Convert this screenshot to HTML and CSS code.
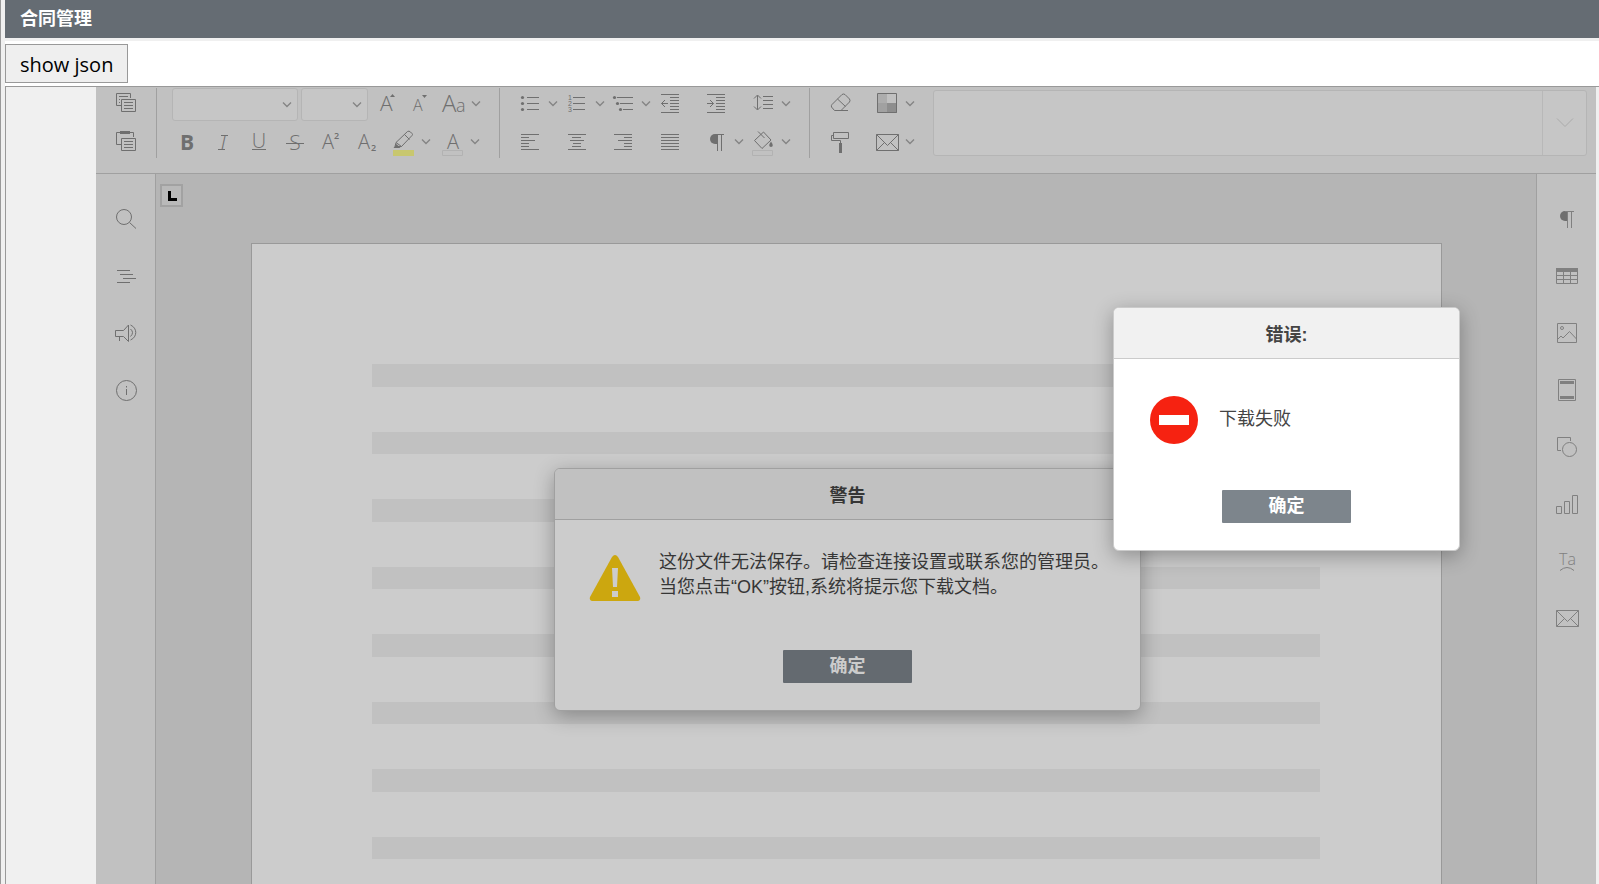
FILE: index.html
```
<!DOCTYPE html>
<html lang="zh">
  <head>
    <meta charset="utf-8" />
    <title>合同管理</title>

    <link rel="stylesheet" href="styles.css">
  </head>

  <body>
    <svg class="symbols" aria-hidden="true">
      <symbol id="caret" viewBox="0 0 10 6"><path d="M1 .5l4 4 4-4" /></symbol>
      <symbol id="pilcrow" viewBox="0 0 14 17">
        <path class="solid" d="M7 0H5a5 5 0 0 0 0 10h2z" />
        <path d="M5 .5h9M7.500 0v17M11.500 0v17" />
      </symbol>
      <symbol id="mail" viewBox="0 0 23 17">
        <path d="M.5 .5h22v16H.5zM.5 .5l11 11 11-11M.5 16.500l8-8M22.500 16.500l-8-8" />
      </symbol>
    </svg>

    <header class="title-bar"><h1>合同管理</h1></header>
    <div class="action-bar">
      <button type="button" class="json-btn">show json</button>
    </div>

    <div class="frame">
      <div class="editor">
        <!-- 工具栏 -->
        <div class="toolbar">
          <div class="group clipboard">
            <div class="row">
              <button type="button" class="tool" aria-label="复制"><svg class="icon" viewBox="0 0 24 28"><path d="M7 15.500H2.500v-12h14V8M5 6.500h9M5 9.500h1M5 12.500h1M7.500 9.500h14v12h-14zM10 12.500h9M10 15.500h9M10 18.500h9" /></svg></button>
            </div>
            <div class="row">
              <button type="button" class="tool" aria-label="粘贴"><svg class="icon" viewBox="0 0 24 28"><path d="M7 16.500H2.500v-12h17V9M7.500 10.500h14v12h-14zM10 13.500h9M10 16.500h9M10 19.500h9" /><path class="solid" d="M6 3h10v3H6z" /></svg></button>
            </div>
          </div>

          <div class="group font">
            <div class="row font-row">
              <div class="combo combo-name">
                <select aria-label="字体"></select>
                <svg class="caret"><use href="#caret" /></svg>
              </div>
              <div class="combo combo-size">
                <select aria-label="字号"></select>
                <svg class="caret"><use href="#caret" /></svg>
              </div>
              <div class="size-tools">
                <button type="button" class="tool narrow" aria-label="增大字号"><svg class="icon" viewBox="0 0 24 28"><text x="5" y="21" class="t21">A</text><path class="solid" d="M15 7l2.500-3L20 7z" /></svg></button>
                <button type="button" class="tool narrow" aria-label="减小字号"><svg class="icon" viewBox="0 0 24 28"><text x="6" y="21" class="t16">A</text><path class="solid" d="M15 5l2.500 3L20 5z" /></svg></button>
                <button type="button" class="tool" aria-label="更改大小写"><svg class="icon" viewBox="0 0 24 28"><text x="1" y="22" class="t24">A</text><text x="15" y="22" class="t18">a</text></svg><svg class="caret"><use href="#caret" /></svg></button>
              </div>
            </div>
            <div class="row">
              <button type="button" class="tool" aria-label="粗体"><svg class="icon" viewBox="0 0 24 28"><text x="5" y="22" class="t21 bold">B</text></svg></button>
              <button type="button" class="tool" aria-label="斜体"><svg class="icon" viewBox="0 0 24 28"><text x="12" y="22" class="t21 mid italic">I</text><path d="M10 7.500h7M7 21.500h7" /></svg></button>
              <button type="button" class="tool" aria-label="下划线"><svg class="icon" viewBox="0 0 24 28"><text x="12" y="20" class="t20 mid">U</text><path d="M5 21.500h14" /></svg></button>
              <button type="button" class="tool" aria-label="删除线"><svg class="icon" viewBox="0 0 24 28"><text x="12" y="22" class="t21 mid">S</text><path d="M3 15.500h18" /></svg></button>
              <button type="button" class="tool" aria-label="上标"><svg class="icon" viewBox="0 0 24 28"><text x="3" y="21" class="t20">A</text><text x="15" y="11" class="t9">2</text></svg></button>
              <button type="button" class="tool" aria-label="下标"><svg class="icon" viewBox="0 0 24 28"><text x="3" y="21" class="t20">A</text><text x="16" y="23" class="t9">2</text></svg></button>
              <button type="button" class="tool" aria-label="突出显示"><svg class="icon" viewBox="0 0 24 28"><path class="marker" d="M2 22h21v6H2z" /><path d="M5 14.500L16.500 3.500q1.500-1 3 .500l1.500 1.500q1 1 0 2L10.500 18.500zM13.500 6.500l5 5M5 14.500l-1 4 6.500 0" /><path class="solid" d="M2.500 20l3-4 4 4z" /></svg><svg class="caret"><use href="#caret" /></svg></button>
              <button type="button" class="tool" aria-label="字体颜色"><svg class="icon" viewBox="0 0 24 28"><text x="13" y="21" class="t20 mid">A</text><path class="swatch" d="M2.500 22.500h20v5h-20z" /></svg><svg class="caret"><use href="#caret" /></svg></button>
            </div>
          </div>

          <div class="group paragraph">
            <div class="row">
              <button type="button" class="tool" aria-label="项目符号"><svg class="icon" viewBox="0 0 24 28"><path d="M9 7.500h12M9 13.500h12M9 19.500h12" /><g class="solid"><circle cx="4.500" cy="7.500" r="1.600" /><circle cx="4.500" cy="13.500" r="1.600" /><circle cx="4.500" cy="19.500" r="1.600" /></g></svg><svg class="caret"><use href="#caret" /></svg></button>
              <button type="button" class="tool" aria-label="编号"><svg class="icon" viewBox="0 0 24 28"><path d="M8 7.500h12M8 13.500h12M8 19.500h12" /><text x="3" y="10" class="t7">1</text><text x="3" y="16" class="t7">2</text><text x="3" y="22" class="t7">3</text></svg><svg class="caret"><use href="#caret" /></svg></button>
              <button type="button" class="tool" aria-label="多级列表"><svg class="icon" viewBox="0 0 24 28"><path d="M6 7.500h16M9 13.500h13M12 19.500h10" /><g class="solid"><circle cx="3.500" cy="7.500" r="1.600" /><circle cx="6.500" cy="13.500" r="1.600" /><circle cx="9.500" cy="19.500" r="1.600" /></g></svg><svg class="caret"><use href="#caret" /></svg></button>
              <button type="button" class="tool" aria-label="减少缩进"><svg class="icon" viewBox="0 0 24 28"><path d="M3 4.500h18M12 7.500h9M12 10.500h9M12 13.500h9M12 16.500h9M12 19.500h9M3 22.500h18M10 13.500H3.500M7 10l-3.500 3.500L7 17" /></svg></button>
              <button type="button" class="tool" aria-label="增加缩进"><svg class="icon" viewBox="0 0 24 28"><path d="M3 4.500h18M12 7.500h9M12 10.500h9M12 13.500h9M12 16.500h9M12 19.500h9M3 22.500h18M3 13.500h6.500M6 10l3.500 3.500L6 17" /></svg></button>
              <button type="button" class="tool" aria-label="行距"><svg class="icon" viewBox="0 0 24 28"><path d="M12 6.500h10M12 10.500h10M12 14.500h10M12 18.500h10M6.500 5.500v14M3 8.500l3.500-3.500L10 8.500M3 16.500L6.500 20l3.500-3.500" /></svg><svg class="caret"><use href="#caret" /></svg></button>
            </div>
            <div class="row">
              <button type="button" class="tool" aria-label="左对齐"><svg class="icon" viewBox="0 0 24 28"><path d="M3 6.500h18M3 9.500h8M3 12.500h14M3 15.500h8M3 18.500h8M3 21.500h18" /></svg></button>
              <button type="button" class="tool" aria-label="居中"><svg class="icon" viewBox="0 0 24 28"><path d="M3 6.500h18M7 9.500h9M5 12.500h14M8 15.500h8M7 18.500h9M3 21.500h18" /></svg></button>
              <button type="button" class="tool" aria-label="右对齐"><svg class="icon" viewBox="0 0 24 28"><path d="M3 6.500h18M13 9.500h8M7 12.500h14M13 15.500h8M13 18.500h8M3 21.500h18" /></svg></button>
              <button type="button" class="tool" aria-label="两端对齐"><svg class="icon" viewBox="0 0 24 28"><path d="M3 6.500h18M3 9.500h18M3 12.500h18M3 15.500h18M3 18.500h18M3 21.500h18" /></svg></button>
              <button type="button" class="tool" aria-label="非打印字符"><svg class="icon" viewBox="0 0 24 28"><use href="#pilcrow" x="6" y="6" width="14" height="17" /></svg><svg class="caret"><use href="#caret" /></svg></button>
              <button type="button" class="tool" aria-label="底纹颜色"><svg class="icon" viewBox="0 0 24 28"><path d="M12.500 4l7.500 8-9 8.500-7.500-8zM7 3.500l6.500 6.500" /><path class="solid" d="M20 13.500q3.500 5 0 5.500-3.500-.5 0-5.500z" /><path class="swatch" d="M1.500 22.500h20v5h-20z" /></svg><svg class="caret"><use href="#caret" /></svg></button>
            </div>
          </div>

          <div class="group extra">
            <div class="row">
              <button type="button" class="tool" aria-label="清除样式"><svg class="icon" viewBox="0 0 24 28"><path d="M13 4.500q1.500-1 3 0l4.500 4.500q1 1.500 0 3L12 20.500H5.500L2.500 17q-.5-1.500.5-2.500zM8.500 9l8 7.500M12 20.500h7" /></svg></button>
              <button type="button" class="tool" aria-label="配色方案"><svg class="icon" viewBox="0 0 24 28"><path class="shade1" d="M2 4h10v9H2z" /><path class="shade2" d="M2 13h10v10H2z" /><path class="shade3" d="M12 13h10v10H12z" /><path d="M2.500 3.500h19v19h-19z" /></svg><svg class="caret"><use href="#caret" /></svg></button>
            </div>
            <div class="row">
              <button type="button" class="tool" aria-label="复制样式"><svg class="icon" viewBox="0 0 24 28"><path d="M4.500 4.500h15v6h-15zM4.500 7.500h-2v5h9V15" /><path class="solid" d="M10 15h3v10h-3z" /></svg></button>
              <button type="button" class="tool" aria-label="邮件合并"><svg class="icon" viewBox="0 0 24 28"><use href="#mail" x="1" y="6" width="23" height="17" /></svg><svg class="caret"><use href="#caret" /></svg></button>
            </div>
          </div>

          <div class="gallery">
            <button type="button" class="gallery-more" aria-label="更多样式"><svg viewBox="0 0 18 10"><path d="M1 .5l8 8 8-8" /></svg></button>
          </div>
        </div>

        <div class="workspace">
          <nav class="side side-left">
            <button type="button" aria-label="搜索"><svg viewBox="0 0 24 24"><circle cx="10" cy="10" r="7.500" /><path d="M15.500 15.500l6.500 6" /></svg></button>
            <button type="button" aria-label="导航"><svg viewBox="0 0 24 24"><path d="M3 6.500h13M6 10.500h13M9 14.500h13M3 18.500h13" /></svg></button>
            <button type="button" aria-label="反馈"><svg viewBox="0 0 24 24"><path d="M14.500 4v16.500l-5-5h-8v-6h8zM5.500 15.500V20M16.500 4c7 3 7 12 0 15M16.500 8q4 3.500 0 7.500" /></svg></button>
            <button type="button" aria-label="关于"><svg viewBox="0 0 24 24"><circle cx="12.500" cy="12.500" r="10" /><path d="M12.500 8v1.500M12.500 11v6" /></svg></button>
          </nav>

          <main class="canvas">
            <button type="button" class="tab-btn" aria-label="制表符"><svg viewBox="0 0 9 10"><path d="M0 0h3v7h6v3H0z" /></svg></button>
            <div class="page">
              <div class="line"></div>
              <div class="line"></div>
              <div class="line"></div>
              <div class="line"></div>
              <div class="line"></div>
              <div class="line"></div>
              <div class="line"></div>
              <div class="line"></div>
            </div>
          </main>

          <nav class="side side-right">
            <button type="button" aria-label="段落设置"><svg viewBox="0 0 24 24"><use href="#pilcrow" x="5" y="4" width="14" height="17" /></svg></button>
            <button type="button" aria-label="表格设置"><svg viewBox="0 0 24 24"><path d="M1.500 4.500h21v15h-21zM1 11.500h22M1 15.500h22M8.500 7v12M15.500 7v12" /><path class="solid" d="M1 4h22v4H1z" /></svg></button>
            <button type="button" aria-label="图像设置"><svg viewBox="0 0 24 24"><path d="M2.500 2.500h19v19h-19zM2.500 18.500l3.500-3.500 2 2 6.500-6.500 7 7.500" /><circle cx="7" cy="7" r="1.500" /></svg></button>
            <button type="button" aria-label="页眉页脚"><svg viewBox="0 0 24 24"><path d="M3.500 1.500h17v21h-17z" /><path class="solid" d="M5 3h14v3H5zM5 18h14v3H5z" /></svg></button>
            <button type="button" aria-label="形状设置"><svg viewBox="0 0 24 24"><path d="M6 15.500H2.500v-13h13V6" /><circle cx="14.500" cy="14.500" r="7" /></svg></button>
            <button type="button" aria-label="图表设置"><svg viewBox="0 0 24 24"><path d="M1.500 14.500h5v7h-5zM9.500 9.500h5v12h-5zM17.500 3.500h5v18h-5z" /></svg></button>
            <button type="button" aria-label="艺术字设置"><svg viewBox="0 0 24 24"><text x="4" y="16" class="t16">Ta</text><path d="M5 21.500q7-6 14 0" /></svg></button>
            <button type="button" aria-label="邮件合并设置"><svg viewBox="0 0 24 24"><use href="#mail" x="1" y="4" width="23" height="17" /></svg></button>
          </nav>
        </div>

        <!-- 弹窗 -->
        <section class="dialog warning" role="dialog" aria-labelledby="warnTitle">
          <h2 id="warnTitle">警告</h2>
          <div class="dialog-body">
            <svg class="dialog-icon" viewBox="0 0 52 46"><path class="tri" d="M23 2q3-4 6 0l22 40q1 3-2 4H3q-3-1-2-4z" /><path class="mark" d="M23 13h6l-1 19h-4zM23 36h6v6h-6z" /></svg>
            <p>这份文件无法保存。请检查连接设置或联系您的管理员。<br />当您点击“OK”按钮,系统将提示您下载文档。</p>
          </div>
          <button type="button" class="ok-btn">确定</button>
        </section>

        <section class="dialog error" role="dialog" aria-labelledby="errTitle">
          <h2 id="errTitle">错误:</h2>
          <div class="dialog-body">
            <svg class="dialog-icon" viewBox="0 0 48 48"><circle cx="24" cy="24" r="24" /><path d="M9 19h30v10H9z" /></svg>
            <p>下载失败</p>
          </div>
          <button type="button" class="ok-btn">确定</button>
        </section>
      </div>
    </div>
  </body>
</html>
```
FILE: styles.css
```
* {
  margin: 0;
  padding: 0;
  box-sizing: border-box;
}
body {
  display: flex;
  flex-direction: column;
  height: 100vh;
  overflow: hidden;
  padding-left: 4px;
  border-left: 1px solid #999;
  background: #f0f0f0;
  font-family: "Liberation Sans", "Noto Sans CJK SC", sans-serif;
  font-size: 18px;
}
button {
  border: 0;
  background: none;
  font: inherit;
}
svg {
  display: block;
  flex-shrink: 0;
  overflow: visible;
  fill: none;
  stroke: #6f6f6f;
}
.symbols {
  display: none;
}
.solid {
  fill: #6f6f6f;
  stroke: none;
}
.title-bar {
  flex-shrink: 0;
  height: 38px;
  padding-left: 15px;
  background: #656c73;
  color: #fff;
}
.title-bar h1 {
  font-size: 18px;
  line-height: 39px;
}
.action-bar {
  flex-shrink: 0;
  height: 45px;
  margin-top: 3px;
  padding-top: 3px;
  background: #fff;
}
.json-btn {
  height: 39px;
  padding: 2px 14px 0;
  border: 1px solid #999;
  background: #efefef;
  color: #000;
  font-family: "Open Sans", sans-serif;
  font-size: 20px;
}
.frame {
  flex: 1;
  min-height: 0;
  padding: 0 3px 0 90px;
  border-top: 1px solid #999;
  border-left: 1px solid #999;
}
.editor {
  position: relative;
  display: flex;
  flex-direction: column;
  height: 100%;
  background: #c1c1c1;
}

/* toolbar */
.toolbar {
  display: flex;
  flex-shrink: 0;
  height: 87px;
  padding: 1px 9px 0 0;
  border-bottom: 1px solid #a0a0a0;
}
.group {
  display: flex;
  flex-direction: column;
  flex-shrink: 0;
  gap: 6px;
  height: 70px;
  border-right: 1px solid #a0a0a0;
}
.row {
  display: flex;
  height: 32px;
}
.clipboard {
  padding: 0 12px;
}
.font {
  padding: 0 15px 0 12px;
}
.font-row {
  gap: 3px;
  padding-left: 3px;
}
.paragraph {
  padding: 0 18px 0 12px;
}
.paragraph .row {
  display: grid;
  grid-template-columns: repeat(3, 47px 46px);
}
.extra {
  padding: 0 18px 0 13px;
  border-right: 0;
}
.extra .row {
  display: grid;
  grid-template-columns: 46px 46px;
}
.tool {
  display: flex;
  align-items: center;
  padding: 0 0 0 6px;
}
.tool .icon {
  width: 24px;
  height: 28px;
  margin-right: 6px;
}
.tool.narrow {
  padding-left: 4px;
}
.tool.narrow .icon {
  margin-right: 4px;
}
.caret {
  width: 10px;
  height: 6px;
  margin-right: 3px;
  stroke: #858585;
  stroke-width: 1.4;
}
.size-tools {
  display: flex;
}
.combo {
  display: grid;
  align-items: center;
}
.combo-name {
  width: 126px;
}
.combo-size {
  width: 67px;
}
.combo select,
.combo .caret {
  grid-area: 1 / 1;
}
.combo .caret {
  justify-self: end;
  margin-right: 6px;
  pointer-events: none;
}
.combo select {
  appearance: none;
  width: 100%;
  height: 33px;
  border: 1px solid #b5b5b5;
  border-radius: 3px;
  background: #c6c6c6;
}
.marker {
  fill: #c8c76f;
  stroke: none;
}
.swatch {
  stroke: #b2b2b2;
}
.shade1 {
  fill: #adadad;
  stroke: none;
}
.shade2 {
  fill: #a1a1a1;
  stroke: none;
}
.shade3 {
  fill: #8e8e8e;
  stroke: none;
}
.gallery {
  display: flex;
  flex: 1;
  justify-content: flex-end;
  height: 66px;
  margin-top: 2px;
  border: 1px solid #b5b5b5;
  border-radius: 3px;
  background: #c6c6c6;
}
.gallery-more {
  display: flex;
  align-items: center;
  justify-content: center;
  width: 44px;
  border-left: 1px solid #b8b8b8;
}
.gallery-more svg {
  width: 18px;
  height: 10px;
  stroke: #ababab;
}

/* letters inside the icons */
text {
  fill: #6f6f6f;
  stroke: none;
  font-family: "Open Sans", sans-serif;
  font-weight: 300;
}
.mid {
  text-anchor: middle;
}
.bold {
  font-weight: 700;
}
.italic {
  font-style: italic;
}
.t7 {
  font-family: "Liberation Sans", sans-serif;
  font-size: 7px;
  font-weight: 400;
}
.t9 {
  font-size: 9px;
  font-weight: 600;
}
.t16 {
  font-size: 16px;
}
.t18 {
  font-size: 18px;
}
.t20 {
  font-size: 20px;
}
.t21 {
  font-size: 21px;
}
.t24 {
  font-size: 24px;
}

/* side panels and page */
.workspace {
  display: flex;
  flex: 1;
  min-height: 0;
}
.side {
  display: flex;
  flex-direction: column;
  flex-shrink: 0;
  gap: 1px;
  width: 60px;
  padding-top: 17px;
}
.side-left {
  border-right: 1px solid #a0a0a0;
}
.side-right {
  border-left: 1px solid #a0a0a0;
}
.side button {
  display: flex;
  align-items: center;
  height: 56px;
  padding-left: 18px;
}
.side svg {
  width: 24px;
  height: 24px;
}
.side-right svg {
  stroke: #808080;
}
.side-right .solid,
.side-right text {
  fill: #808080;
}
.canvas {
  display: grid;
  grid-template-columns: 95px 1fr;
  flex: 1;
  min-width: 0;
  padding-right: 94px;
  overflow: hidden;
  background: #b5b5b5;
}
.tab-btn {
  display: flex;
  align-items: center;
  justify-content: center;
  width: 23px;
  height: 23px;
  margin: 10px 0 0 4px;
  padding-left: 1px;
  border: 2px solid #a2a2a2;
  background: #b9b9b9;
}
.tab-btn svg {
  width: 9px;
  height: 10px;
  fill: #000;
  stroke: none;
}
.page {
  display: flex;
  flex-direction: column;
  gap: 45px;
  height: 1684px;
  margin-top: 69px;
  padding: 120px 121px 120px 120px;
  border: 1px solid #999;
  background: #ccc;
}
.line {
  flex-shrink: 0;
  height: 23px;
  background: #c1c1c1;
}
.line:nth-child(even) {
  height: 22px;
}

/* dialogs */
.dialog {
  position: absolute;
  display: flex;
  flex-direction: column;
  border: 1px solid #cbcbcb;
  border-radius: 6px;
  background: #fff;
  color: #444;
  box-shadow: 0 5px 20px rgba(0, 0, 0, 0.3);
}
.dialog h2 {
  height: 51px;
  border-bottom: 1px solid #cbcbcb;
  border-radius: 5px 5px 0 0;
  background: #f1f1f1;
  font-size: 18px;
  line-height: 54px;
  text-align: center;
}
.dialog-body {
  display: flex;
  align-items: flex-start;
  height: 130px;
  padding: 36px 36px 0;
}
.dialog-body p {
  line-height: 25px;
  white-space: nowrap;
}
.ok-btn {
  align-self: center;
  width: 129px;
  height: 33px;
  margin-bottom: 27px;
  border-radius: 1px;
  background: #7d858c;
  color: #fff;
  font-weight: 700;
  line-height: 31px;
}
.warning {
  top: 381px;
  left: 458px;
  width: 587px;
  border-color: #a0a0a0;
  background: #ccc;
  color: #363636;
}
.warning h2 {
  border-color: #a0a0a0;
  background: #c1c1c1;
}
.warning .dialog-body {
  gap: 18px;
  padding: 30px 34px 0;
}
.warning .dialog-icon {
  width: 52px;
  height: 46px;
  margin-top: 5px;
  stroke: none;
}
.warning .ok-btn {
  background: #646a70;
  color: #ccc;
}
.tri {
  fill: #cca70f;
}
.mark {
  fill: #ccc;
}
.error {
  top: 220px;
  right: 136px;
  width: 347px;
}
.error .dialog-body {
  align-items: center;
  gap: 21px;
  height: 131px;
  padding-top: 0;
  padding-bottom: 10px;
}
.error .dialog-icon {
  width: 48px;
  height: 48px;
  stroke: none;
}
.error circle {
  fill: #f62211;
}
.error path {
  fill: #fff;
}
```
